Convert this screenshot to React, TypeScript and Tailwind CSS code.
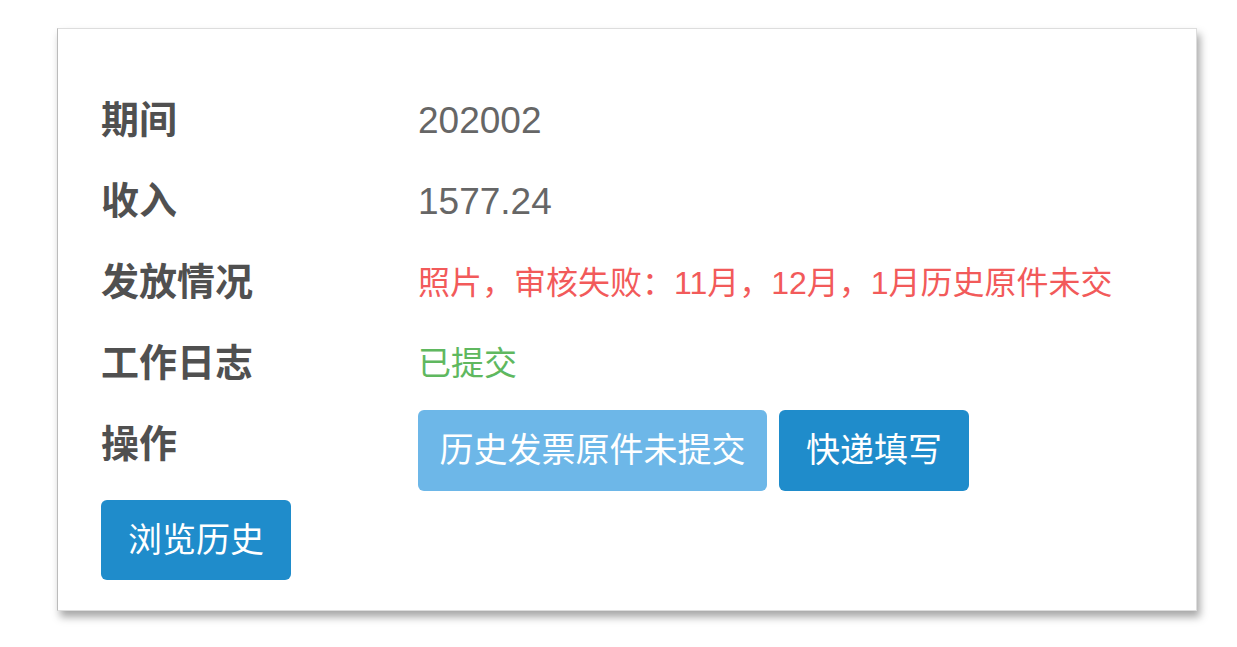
import React from "react";

const font = { fontFamily: '"Liberation Sans", "Noto Sans CJK SC", sans-serif' };

function Row({ label, children }: { label: string; children: React.ReactNode }) {
  return (
    <div className="flex h-[81px] items-center">
      <div className="w-[317px] shrink-0 text-[38px] font-semibold text-[#505050]">{label}</div>
      <div className="flex-1">{children}</div>
    </div>
  );
}

export default function App() {
  return (
    <div className="w-[1237px] h-[647px] bg-white" style={font}>
      <div className="pt-[28px] pl-[57px]">
        <div className="w-[1140px] h-[583px] bg-white border border-[#ddd] border-l-[#bbb] shadow-[3px_6px_8px_rgba(0,0,0,0.35)] pl-[43px] pt-[51px]">
          <Row label="期间">
            <span className="text-[37px] text-[#666]">202002</span>
          </Row>
          <Row label="收入">
            <span className="text-[37px] text-[#666]">1577.24</span>
          </Row>
          <Row label="发放情况">
            <span className="text-[32px] text-[#f25a5a]">照片，审核失败：11月，12月，1月历史原件未交</span>
          </Row>
          <Row label="工作日志">
            <span className="text-[33px] text-[#5fb85f]">已提交</span>
          </Row>
          <div className="flex items-start mt-[6px]">
            <div className="w-[317px] shrink-0 h-[68px] flex items-center text-[38px] font-semibold text-[#505050]">操作</div>
            <div className="flex gap-[12px]">
              <button className="w-[349px] h-[81px] rounded-[6px] bg-[#6db7e8] text-white text-[34px] flex items-center justify-center">
                历史发票原件未提交
              </button>
              <button className="w-[190px] h-[81px] rounded-[6px] bg-[#1f8ccb] text-white text-[34px] flex items-center justify-center">
                快递填写
              </button>
            </div>
          </div>
          <button className="mt-[9px] w-[190px] h-[80px] rounded-[6px] bg-[#1f8ccb] text-white text-[34px] flex items-center justify-center">
            浏览历史
          </button>
        </div>
      </div>
    </div>
  );
}
